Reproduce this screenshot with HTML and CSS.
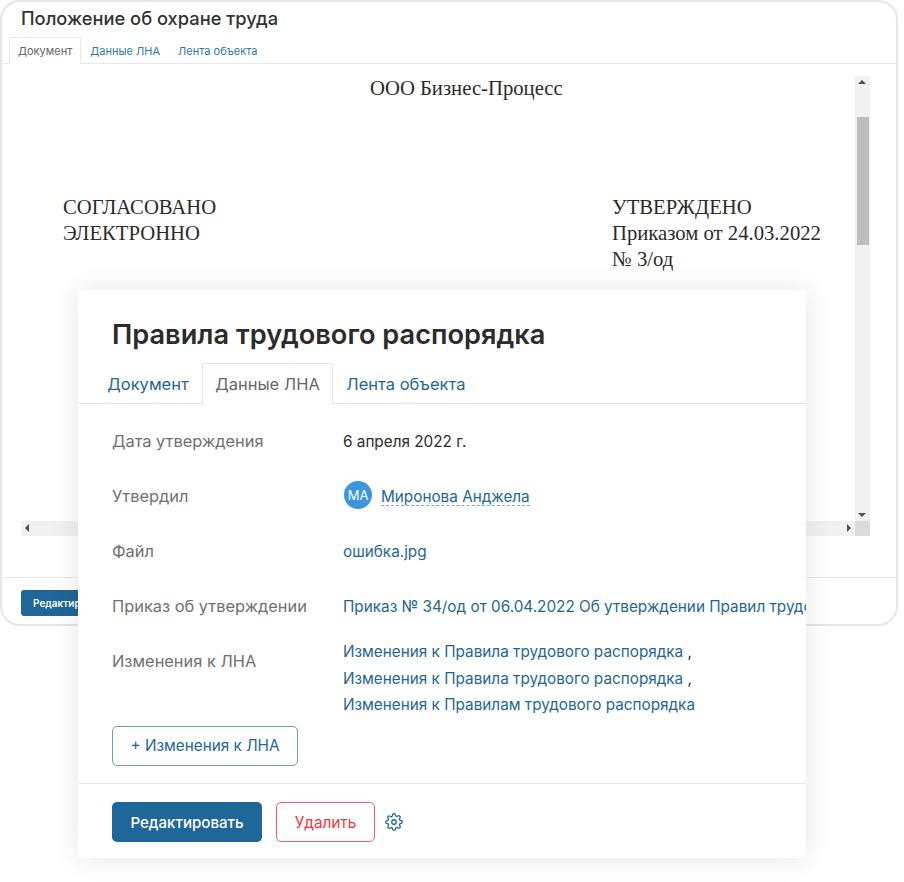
FILE: index.html
```html
<!DOCTYPE html>
<html lang="ru">
<head>
  <meta charset="UTF-8" />
  <title>Правила трудового распорядка</title>
  <link rel="stylesheet" href="styles.css">
</head>
<body>

  <div class="back-window">
    <h2 class="back-title">Положение об охране труда</h2>
    <div class="back-tabs">
      <a class="back-tab active">Документ</a>
      <a class="back-tab">Данные ЛНА</a>
      <a class="back-tab">Лента объекта</a>
    </div>
    <div class="doc-area">
      <div class="doc-view">
        <div class="doc-page">
          <div class="doc-org">ООО Бизнес-Процесс</div>
          <div class="doc-columns">
            <div>СОГЛАСОВАНО<br>ЭЛЕКТРОННО</div>
            <div class="doc-right">УТВЕРЖДЕНО<br>Приказом от 24.03.2022<br>№ 3/од</div>
          </div>
        </div>
        <div class="scroll-v">
          <span class="arrow arrow-up"></span>
          <span class="thumb-v"></span>
          <span class="arrow arrow-down"></span>
        </div>
      </div>
      <div class="scroll-h">
        <span class="arrow arrow-left"></span>
        <span class="arrow arrow-right"></span>
        <span class="scroll-corner"></span>
      </div>
    </div>
    <div class="back-footer">
      <button class="back-btn">Редактировать</button>
    </div>
  </div>

  <div class="card">
    <h1 class="card-title">Правила трудового распорядка</h1>
    <div class="tabs">
      <a class="tab">Документ</a>
      <a class="tab active">Данные ЛНА</a>
      <a class="tab">Лента объекта</a>
    </div>

    <div class="fields">
      <div class="field">
        <div class="label">Дата утверждения</div>
        <div class="value">6 апреля 2022 г.</div>
      </div>
      <div class="field">
        <div class="label">Утвердил</div>
        <div class="value user">
          <span class="avatar">МА</span>
          <a class="link user-link">Миронова Анджела</a>
        </div>
      </div>
      <div class="field">
        <div class="label">Файл</div>
        <div class="value"><a class="link">ошибка.jpg</a></div>
      </div>
      <div class="field">
        <div class="label">Приказ об утверждении</div>
        <div class="value"><a class="link">Приказ № 34/од от 06.04.2022 Об утверждении Правил трудового распорядка</a></div>
      </div>
      <div class="field field-list">
        <div class="label">Изменения к ЛНА</div>
        <div class="value changes">
          <div><a class="link">Изменения к Правила трудового распорядка</a> ,</div>
          <div><a class="link">Изменения к Правила трудового распорядка</a> ,</div>
          <div><a class="link">Изменения к Правилам трудового распорядка</a></div>
        </div>
      </div>
      <button class="btn btn-add">+ Изменения к ЛНА</button>
    </div>

    <div class="card-footer">
      <button class="btn btn-primary">Редактировать</button>
      <button class="btn btn-danger">Удалить</button>
      <svg class="gear" width="18" height="18" viewBox="0 0 24 24" fill="none" stroke="#1f6699" stroke-width="1.7" stroke-linecap="round" stroke-linejoin="round">
        <circle cx="12" cy="12" r="3"/>
        <path d="M19.4 15a1.65 1.65 0 0 0 .33 1.82l.06.06a2 2 0 1 1-2.83 2.83l-.06-.06a1.65 1.65 0 0 0-2.82 1.17V21a2 2 0 1 1-4 0v-.09a1.65 1.65 0 0 0-2.82-1.08l-.06.06a2 2 0 1 1-2.83-2.83l.06-.06a1.65 1.65 0 0 0-1.17-2.82H3a2 2 0 1 1 0-4h.09a1.65 1.65 0 0 0 1.08-2.82l-.06-.06a2 2 0 1 1 2.83-2.83l.06.06a1.65 1.65 0 0 0 1.82.33H9a1.65 1.65 0 0 0 1-1.51V3a2 2 0 1 1 4 0v.09a1.65 1.65 0 0 0 2.82 1.08l.06-.06a2 2 0 1 1 2.83 2.83l-.06.06a1.65 1.65 0 0 0-.33 1.82V9a1.65 1.65 0 0 0 1.51 1H21a2 2 0 1 1 0 4h-.09a1.65 1.65 0 0 0-1.51 1z"/>
      </svg>
    </div>
  </div>

</body>
</html>
```

FILE: styles.css
```css
html, body {
  height: 100%;
}
body {
  font-family: Inter, "Noto Sans", sans-serif;
  background: #fff;
  margin: 0;
  position: relative;
  overflow: hidden;
  color: #2b2b2b;
}

/* window behind the card */
.back-window {
  box-sizing: border-box;
  width: 898px;
  height: 626px;
  border: 2px solid #e6e6e6;
  border-radius: 20px;
  background: #fff;
  display: flex;
  flex-direction: column;
}
.back-title {
  margin: 0;
  padding: 6px 0 0 19px;
  font-size: 18.3px;
  line-height: 21px;
  font-weight: 500;
  color: #333;
}
.back-tabs {
  display: flex;
  margin-top: 8px;
  padding-left: 7px;
  height: 26px;
  border-bottom: 1px solid #e8e8e8;
  font-size: 11px;
  line-height: 26px;
}
.back-tab {
  padding: 0 8px;
  color: #2f77ad;
  border: 1px solid transparent;
  border-bottom: 0;
}
.back-tab.active {
  color: #666;
  background: #fff;
  height: 26px;
  border-color: #e8e8e8;
  border-radius: 2px 2px 0 0;
}
.doc-area {
  margin: 12px 0 0 19px;
  width: 849px;
}
.doc-view {
  display: flex;
  height: 445px;
}
.doc-page {
  flex: 1;
  font-family: "Liberation Serif", serif;
  font-size: 20.7px;
  line-height: 26px;
  color: #2b2b2b;
  padding: 0 0 0 42px;
  margin-top: -1px;
}
.doc-org {
  padding-left: 307px;
}
.doc-columns {
  display: flex;
  justify-content: space-between;
  margin-top: 93px;
  padding-right: 33px;
}
.doc-right {
  width: 210px;
  white-space: nowrap;
}
.scroll-v {
  width: 15px;
  background: #f1f1f1;
  position: relative;
  flex: none;
}
.thumb-v {
  position: absolute;
  left: 2px;
  right: 1px;
  top: 41px;
  height: 128px;
  background: #bebebe;
}
.scroll-h {
  height: 15px;
  background: #f1f1f1;
  position: relative;
}
.scroll-corner {
  position: absolute;
  right: 0;
  top: 0;
  width: 15px;
  height: 15px;
  background: #dcdcdc;
}
.arrow {
  position: absolute;
  width: 0;
  height: 0;
  border: 4px solid transparent;
}
.arrow-up {
  top: 0;
  left: 3px;
  border-bottom-color: #505050;
}
.arrow-down {
  bottom: 0;
  left: 3px;
  border-top-color: #505050;
}
.arrow-left {
  left: 0;
  top: 3px;
  border-right-color: #505050;
}
.arrow-right {
  right: 15px;
  top: 3px;
  border-left-color: #505050;
}
.back-footer {
  margin-top: 41px;
  border-top: 1px solid #e8e8e8;
  padding: 12px 0 0 19px;
}
.back-btn {
  width: 120px;
  height: 26px;
  border: 0;
  border-radius: 3px;
  background: #1f6699;
  color: #fff;
  font-family: inherit;
  font-size: 10px;
  font-weight: 600;
  text-align: left;
  padding-left: 12px;
}

/* card on top */
.card {
  position: absolute;
  left: 78px;
  top: 290px;
  width: 728px;
  height: 568px;
  background: #fff;
  border-radius: 3px;
  box-shadow: 0 0 28px rgba(0, 0, 0, 0.1);
  overflow: hidden;
  display: flex;
  flex-direction: column;
}
.card-title {
  margin: 0;
  padding: 28px 0 0 34px;
  font-size: 27.2px;
  line-height: 33px;
  font-weight: 600;
  color: #2b2b2b;
}
.tabs {
  display: flex;
  margin-top: 12px;
  padding-left: 16px;
  height: 40px;
  border-bottom: 1px solid #e5e5e5;
  font-size: 16.5px;
  line-height: 40px;
}
.tab {
  padding: 0 12.25px;
  color: #1f6699;
  border: 1px solid transparent;
  border-bottom: 0;
}
.tab.active {
  color: #666;
  background: #fff;
  height: 41px;
  border-color: #e5e5e5;
  border-radius: 3px 3px 0 0;
}
.fields {
  flex: 1;
  padding: 10px 0 0 34px;
}
.field {
  display: flex;
  height: 55px;
  line-height: 55px;
  white-space: nowrap;
}
.label {
  width: 231px;
  flex: none;
  font-size: 16.4px;
  color: #707070;
}
.value {
  font-size: 15.3px;
  color: #2b2b2b;
}
.link {
  color: #1f6699;
}
.user {
  display: flex;
  align-items: center;
  gap: 9px;
}
.avatar {
  width: 28px;
  height: 28px;
  margin: -3px 0 0 1px;
  border-radius: 50%;
  background: #3b97dc;
  color: #fff;
  font-size: 13px;
  line-height: 28px;
  text-align: center;
}
.user-link {
  line-height: 17px;
  border-bottom: 1px dashed #7fa9c8;
}
.field-list {
  height: auto;
}
.changes {
  margin-top: 5px;
  line-height: 26.5px;
}
.btn {
  box-sizing: border-box;
  height: 40px;
  border-radius: 5px;
  font-family: inherit;
  font-size: 15.3px;
  background: #fff;
}
.btn-add {
  display: block;
  width: 186px;
  margin-top: 7px;
  border: 1px solid #6d9dc1;
  color: #1f6699;
}
.card-footer {
  display: flex;
  align-items: center;
  height: 75px;
  box-sizing: border-box;
  border-top: 1px solid #e8e8e8;
  padding: 2px 0 0 34px;
}
.btn-primary {
  width: 150px;
  border: 0;
  background: #1f6699;
  color: #fff;
  font-size: 15.1px;
  font-weight: 500;
}
.btn-danger {
  width: 99px;
  margin-left: 14px;
  border: 1px solid #fb5a63;
  color: #f8333f;
}
.gear {
  margin-left: 10px;
}
```
